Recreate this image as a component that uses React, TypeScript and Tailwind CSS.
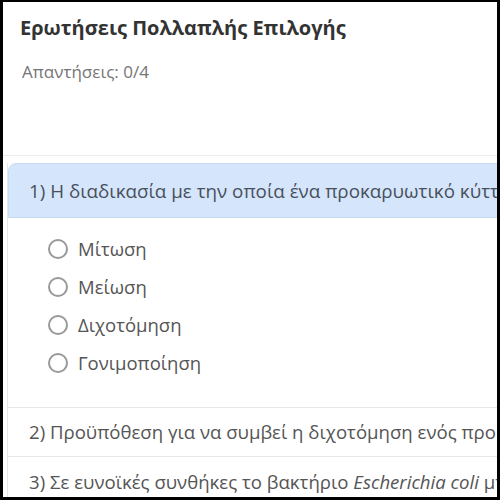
const options = ["Μίτωση", "Μείωση", "Διχοτόμηση", "Γονιμοποίηση"];

function Radio() {
  return <span className="h-[20px] w-[20px] shrink-0 rounded-full border-2 border-[#999] bg-white" />;
}

export default function App() {
  return (
    <div
      className="h-[500px] w-[500px] overflow-hidden border-b-[3px] border-l-[3px] border-r-[3px] border-t-2 border-black bg-white"
      style={{ fontFamily: '"Open Sans", "Noto Sans", sans-serif' }}
    >
      <div className="h-[154px] border-b border-[#ececec] pl-[17px] pt-[12px]">
        <h1 className="text-[20px] font-bold leading-[28px] text-[#333]">Ερωτήσεις Πολλαπλής Επιλογής</h1>
        <p className="ml-[2px] mt-[18px] text-[17px] leading-[24px] text-[#757575]">Απαντήσεις: 0/4</p>
      </div>
      <div className="pl-[4px] pt-[7px]">
        <div className="w-[700px] border-l border-[#e6e6e6]">
          <div className="flex h-[55px] items-center rounded-tl-lg border border-[#c8dbf6] bg-[#d5e5fb] pl-[20px]">
            <p className="whitespace-nowrap text-[18.8px] leading-[26px] text-[#48505c]">
              1) Η διαδικασία με την οποία ένα προκαρυωτικό κύτταρο διαιρείται ονομάζεται:
            </p>
          </div>
          <ul className="pb-[25px] pl-[40px] pt-[12px]">
            {options.map((o) => (
              <li key={o} className="flex h-[38px] items-center gap-[10px] text-[18.5px] text-[#555]">
                <Radio />
                <span>{o}</span>
              </li>
            ))}
          </ul>
          <div className="flex h-[50px] items-center border-y border-[#e8e8e8] pl-[21px]">
            <p className="whitespace-nowrap text-[18.6px] leading-[26px] text-[#555]">
              2) Προϋπόθεση για να συμβεί η διχοτόμηση ενός προκαρυωτικού κυττάρου είναι:
            </p>
          </div>
          <div className="flex h-[50px] items-center pl-[21px]">
            <p className="whitespace-nowrap text-[18.6px] leading-[26px] text-[#555]">
              3) Σε ευνοϊκές συνθήκες το βακτήριο <i>Escherichia coli</i> μπορεί να διαιρείται κάθε:
            </p>
          </div>
        </div>
      </div>
    </div>
  );
}
